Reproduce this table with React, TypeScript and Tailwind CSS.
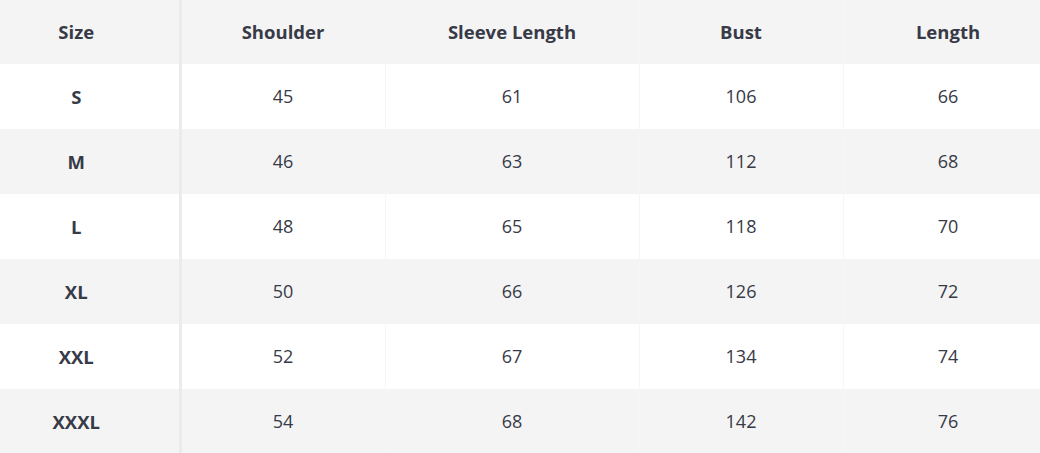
import React from 'react';

const headers = ['Shoulder', 'Sleeve Length', 'Bust', 'Length'];

const rows: { size: string; values: number[] }[] = [
    { size: 'S', values: [45, 61, 106, 66] },
    { size: 'M', values: [46, 63, 112, 68] },
    { size: 'L', values: [48, 65, 118, 70] },
    { size: 'XL', values: [50, 66, 126, 72] },
    { size: 'XXL', values: [52, 67, 134, 74] },
    { size: 'XXXL', values: [54, 68, 142, 76] },
];

const App: React.FC = () => {
    return (
        <div className="w-[1040px] h-[453px] overflow-hidden bg-white text-[#373a47] font-['Open_Sans',sans-serif]">
            <table className="table-fixed border-collapse w-[1053px] text-[18px]">
                <colgroup>
                    <col className="w-[180px]" />
                    <col className="w-[205px]" />
                    <col className="w-[254px]" />
                    <col className="w-[204px]" />
                    <col className="w-[210px]" />
                </colgroup>
                <thead>
                    <tr className="h-[64px] bg-[#f4f4f4]">
                        <th className="font-bold text-[18.5px] pr-[26px] border-r-[3px] border-[#ebebeb]">Size</th>
                        {headers.map((h) => (
                            <th key={h} className="font-bold text-[18.5px] border-r border-[#f6f6f6]">
                                {h}
                            </th>
                        ))}
                    </tr>
                </thead>
                <tbody>
                    {rows.map((row, i) => (
                        <tr key={row.size} className={`h-[65px] ${i % 2 === 0 ? 'bg-white' : 'bg-[#f4f4f4]'}`}>
                            <td className="text-center font-bold text-[18.5px] pr-[26px] border-r-[3px] border-[#ebebeb]">
                                {row.size}
                            </td>
                            {row.values.map((v, j) => (
                                <td key={j} className="text-center border-r border-[#f6f6f6]">
                                    {v}
                                </td>
                            ))}
                        </tr>
                    ))}
                </tbody>
            </table>
        </div>
    );
};

export default App;
